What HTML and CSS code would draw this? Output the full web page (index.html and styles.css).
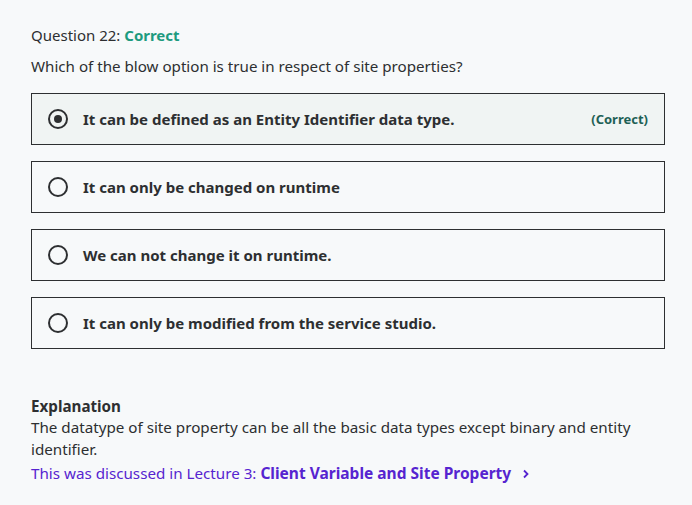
FILE: index.html
```html
<!DOCTYPE html>
<html>
<head>
<meta charset="utf-8">
<link rel="stylesheet" href="styles.css">
</head>
<body>
<div class="page">
  <div class="qtitle">Question 22: <span class="ok">Correct</span></div>
  <div class="prompt">Which of the blow option is true in respect of site properties?</div>
  <ul class="options">
    <li class="option selected">
      <span class="radio checked"></span>
      <span class="label">It can be defined as an Entity Identifier data type.</span>
      <span class="tag">(Correct)</span>
    </li>
    <li class="option">
      <span class="radio"></span>
      <span class="label">It can only be changed on runtime</span>
    </li>
    <li class="option">
      <span class="radio"></span>
      <span class="label">We can not change it on runtime.</span>
    </li>
    <li class="option">
      <span class="radio"></span>
      <span class="label">It can only be modified from the service studio.</span>
    </li>
  </ul>
  <div class="explanation">
    <div class="exp-title">Explanation</div>
    <div class="exp-body">The datatype of site property can be all the basic data types except binary and entity identifier.</div>
    <div class="lecture">This was discussed in Lecture 3: <a class="lecture-link">Client Variable and Site Property<svg class="chev" width="12" height="12" viewBox="0 0 12 12"><path d="M4 2.5 L7.5 6 L4 9.5" fill="none" stroke="currentColor" stroke-width="1.8"/></svg></a></div>
  </div>
</div>
</body>
</html>
```
FILE: styles.css
```css
* { box-sizing: border-box; }
html, body { margin: 0; padding: 0; }
body {
  background: #f7f9fa;
  font-family: "Noto Sans", "Open Sans", sans-serif;
  color: #2d2f31;
  width: 692px;
  height: 505px;
  overflow: hidden;
}
.page {
  padding: 25px 27px 0 31px;
}
.qtitle {
  font-size: 15px;
  line-height: 20px;
}
.ok {
  color: #1d9b7f;
  font-weight: 700;
}
.prompt {
  margin-top: 11px;
  font-size: 15.15px;
  line-height: 20px;
}
.options {
  list-style: none;
  margin: 17px 0 0 0;
  padding: 0;
  display: flex;
  flex-direction: column;
  gap: 16px;
}
.option {
  height: 52px;
  border: 1px solid #2d2f31;
  display: flex;
  align-items: center;
  padding: 0 16px;
}
.option.selected {
  background: #f0f4f3;
}
.radio {
  width: 20px;
  height: 20px;
  border: 2px solid #2d2f31;
  border-radius: 50%;
  flex: none;
  display: flex;
  align-items: center;
  justify-content: center;
}
.radio.checked::after {
  content: "";
  width: 8px;
  height: 8px;
  border-radius: 50%;
  background: #2d2f31;
}
.label {
  margin-left: 15px;
  font-weight: 700;
  font-size: 15px;
  flex: 1;
}
.tag {
  font-size: 13px;
  font-weight: 700;
  color: #1e6055;
}
.explanation {
  margin-top: 48px;
  font-size: 15.2px;
  line-height: 22px;
}
.exp-title {
  font-weight: 700;
  line-height: 19px;
}
.lecture {
  margin-top: 2px;
  color: #5624d0;
}
.lecture-link {
  font-weight: 700;
  font-size: 15.5px;
  color: #5624d0;
}
.chev {
  margin-left: 9px;
  vertical-align: -1px;
}
```
